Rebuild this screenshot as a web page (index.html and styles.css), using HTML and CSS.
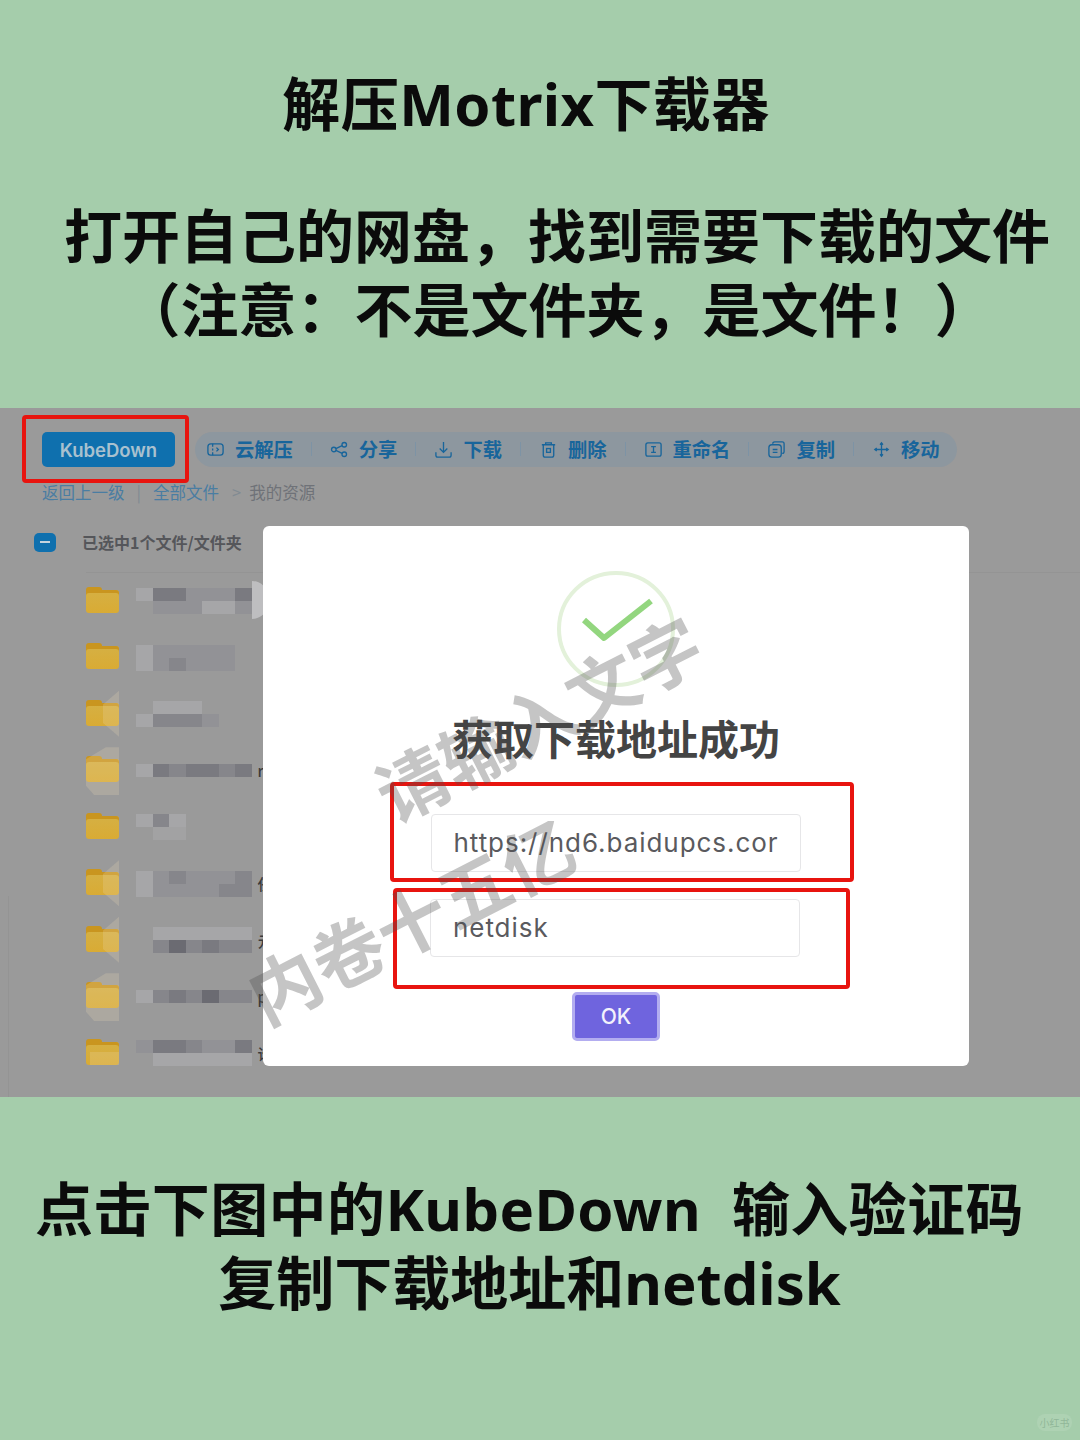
FILE: index.html
```html
<!DOCTYPE html>
<html lang="zh-CN">
<head>
    <meta charset="UTF-8">
    <title>解压Motrix下载器</title>
    <link rel="stylesheet" href="styles.css">
</head>
<body>
    <div class="page">
        <section class="caption caption-top">
            <h1 class="title">解压Motrix下载器</h1>
            <p class="line">打开自己的网盘，找到需要下载的文件</p>
            <p class="line line-sub">（注意：不是文件夹，是文件！）</p>
        </section>

        <section class="shot">
            <div class="toolbar">
                <div class="red-box kube-box"><button class="kube">KubeDown</button></div>
                <div class="actions">
                    <span class="action">
                        <svg viewBox="0 0 20 20"><rect x="2" y="4" width="16" height="12" rx="3"/><path d="M7 4v3M7 9v2M7 13v3M11 8l2 2-2 2"/></svg>云解压
                    </span>
                    <i class="sep"></i>
                    <span class="action">
                        <svg viewBox="0 0 20 20"><circle cx="4" cy="10" r="2.4"/><circle cx="15" cy="5" r="2.4"/><circle cx="15" cy="15" r="2.4"/><path d="M6.2 9l6.6-3M6.2 11l6.6 3"/></svg>分享
                    </span>
                    <i class="sep"></i>
                    <span class="action">
                        <svg viewBox="0 0 20 20"><path d="M10 2v11M6 9l4 4 4-4M2 13v3a2 2 0 0 0 2 2h12a2 2 0 0 0 2-2v-3"/></svg>下载
                    </span>
                    <i class="sep"></i>
                    <span class="action">
                        <svg viewBox="0 0 20 20"><path d="M3 5h14M7 5V3h6v2M4.500 5v11a2 2 0 0 0 2 2h7a2 2 0 0 0 2-2V5"/><rect x="8" y="9" width="4" height="4"/></svg>删除
                    </span>
                    <i class="sep"></i>
                    <span class="action">
                        <svg viewBox="0 0 20 20"><rect x="2" y="3" width="16" height="14" rx="2"/><path d="M7.500 7h5M10 7v6M7.500 13h5"/></svg>重命名
                    </span>
                    <i class="sep"></i>
                    <span class="action">
                        <svg viewBox="0 0 20 20"><path d="M6 4a2 2 0 0 1 2-2h8a2 2 0 0 1 2 2v8a2 2 0 0 1-2 2"/><rect x="2" y="5" width="13" height="13" rx="3"/><path d="M6 10h5M6 13h5"/></svg>复制
                    </span>
                    <i class="sep"></i>
                    <span class="action">
                        <svg viewBox="0 0 20 20"><path d="M10 3v14M3 10h14M8.500 5L10 3l1.500 2M8.500 15l1.500 2 1.500-2M5 8.500L3 10l2 1.500M15 8.500l2 1.500-2 1.500"/></svg>移动
                    </span>
                </div>
            </div>

            <div class="crumbs">
                <a>返回上一级</a><i>|</i><a>全部文件</a><i class="gt">&gt;</i><span>我的资源</span>
            </div>

            <div class="selected">
                <span class="check"></span>
                <span class="selected-text">已选中1个文件/文件夹</span>
            </div>

            <div class="files">
                <div class="file">
                    <span class="folder"></span>
                    <div class="strip">
                        <b class="s1"></b><b class="s4"></b><b class="s4"></b><b class="s2"></b><b class="s2"></b><b class="s2"></b><b class="s4"></b>
                        <b></b><b class="s2"></b><b class="s2"></b><b class="s2"></b><b class="s1"></b><b class="s1"></b><b class="s2"></b>
                    </div>
                    <span class="blob"></span>
                </div>
                <div class="file">
                    <span class="folder"></span>
                    <div class="strip">
                        <b class="s1"></b><b class="s2"></b><b class="s2"></b><b class="s2"></b><b class="s2"></b><b class="s2"></b><b></b>
                        <b class="s1"></b><b class="s2"></b><b class="s3"></b><b class="s2"></b><b class="s2"></b><b class="s2"></b><b></b>
                    </div>
                </div>
                <div class="file">
                    <span class="folder ghost ghost-right"></span>
                    <div class="strip">
                        <b></b><b class="s1"></b><b class="s1"></b><b class="s1"></b><b></b><b></b><b></b>
                        <b class="s1"></b><b class="s3"></b><b class="s3"></b><b class="s3"></b><b class="s2"></b><b></b><b></b>
                    </div>
                </div>
                <div class="file">
                    <span class="folder ghost ghost-wide"></span>
                    <div class="strip strip-low">
                        <b class="s1"></b><b class="s4"></b><b class="s3"></b><b class="s4"></b><b class="s4"></b><b class="s3"></b><b class="s4"></b>
                        <b></b><b></b><b></b><b></b><b></b><b></b><b></b>
                    </div>
                    <span class="cut">r</span>
                </div>
                <div class="file">
                    <span class="folder"></span>
                    <div class="strip">
                        <b class="s1"></b><b class="s3"></b><b class="s1"></b><b></b><b></b><b></b><b></b>
                        <b></b><b class="s0"></b><b class="s0"></b><b></b><b></b><b></b><b></b>
                    </div>
                </div>
                <div class="file">
                    <span class="folder ghost ghost-right"></span>
                    <div class="strip">
                        <b class="s1"></b><b class="s2"></b><b class="s3"></b><b class="s2"></b><b class="s2"></b><b class="s2"></b><b class="s3"></b>
                        <b class="s1"></b><b class="s2"></b><b class="s2"></b><b class="s2"></b><b class="s2"></b><b class="s3"></b><b class="s3"></b>
                    </div>
                    <span class="cut">任</span>
                </div>
                <div class="file">
                    <span class="folder ghost ghost-right"></span>
                    <div class="strip">
                        <b></b><b class="s1"></b><b class="s1"></b><b class="s1"></b><b class="s1"></b><b class="s1"></b><b class="s1"></b>
                        <b></b><b class="s3"></b><b class="s5"></b><b class="s3"></b><b class="s4"></b><b class="s3"></b><b class="s3"></b>
                    </div>
                    <span class="cut">亓</span>
                </div>
                <div class="file">
                    <span class="folder ghost ghost-wide"></span>
                    <div class="strip strip-low">
                        <b class="s1"></b><b class="s3"></b><b class="s4"></b><b class="s3"></b><b class="s5"></b><b class="s3"></b><b class="s3"></b>
                        <b></b><b></b><b></b><b></b><b></b><b></b><b></b>
                    </div>
                    <span class="cut">pl</span>
                </div>
                <div class="file">
                    <span class="folder ghost ghost-low"></span>
                    <div class="strip">
                        <b class="s2"></b><b class="s4"></b><b class="s4"></b><b class="s3"></b><b class="s2"></b><b class="s2"></b><b class="s4"></b>
                        <b></b><b class="s1"></b><b class="s1"></b><b class="s1"></b><b class="s1"></b><b class="s1"></b><b class="s1"></b>
                    </div>
                    <span class="cut">论</span>
                </div>
            </div>

            <div class="modal">
                <svg class="success" viewBox="0 0 120 118">
                    <ellipse cx="60" cy="59" rx="57" ry="56" fill="none" stroke="#e3f1da" stroke-width="4"/>
                    <path d="M28 50l20 18L95 31" fill="none" stroke="#93d67f" stroke-width="6" stroke-linejoin="round"/>
                </svg>
                <h2 class="modal-title">获取下载地址成功</h2>
                <div class="red-box url-box"><div class="field">https://nd6.baidupcs.cor</div></div>
                <div class="red-box disk-box"><div class="field">netdisk</div></div>
                <button class="ok">OK</button>
            </div>
        </section>

        <section class="caption caption-bottom">
            <p class="line">点击下图中的KubeDown&nbsp;&nbsp;输入验证码</p>
            <p class="line line-tight">复制下载地址和netdisk</p>
        </section>

        <div class="mark mark-one">请输入文字</div>
        <div class="mark mark-two">内卷十五亿</div>
        <div class="tag">小红书</div>
    </div>
</body>
</html>
```

FILE: styles.css
```css
* {
    box-sizing: border-box;
}
body {
    margin: 0;
    background: #a5cdab;
    font-family: "Noto Sans", "Noto Sans CJK SC", sans-serif;
}
.page {
    position: relative;
    width: 1080px;
    height: 1440px;
    overflow: hidden;
    display: flex;
    flex-direction: column;
}

/* green captions */
.caption {
    color: #0b0b0b;
    text-align: center;
    font-weight: 700;
    font-size: 58px;
    line-height: 74px;
}
.caption-top {
    height: 408px;
    padding-top: 67px;
}
.caption-bottom {
    flex: 1;
    padding: 75px 21px 0 0;
    letter-spacing: 0.4px;
}
.title {
    margin: 0 28px 58px 0;
    font-size: 58px;
    line-height: 74px;
    letter-spacing: 0.4px;
}
.line {
    margin: 0;
    white-space: nowrap;
}
.line-tight {
    letter-spacing: 0;
}
.caption-top .line {
    padding-left: 34px;
}
.caption-top .line-sub {
    padding-left: 35px;
}

/* dimmed screenshot */
.shot {
    position: relative;
    height: 689px;
    background: #9a9a9a;
    padding-top: 7px;
    font-family: "Noto Sans CJK SC", sans-serif;
    overflow: hidden;
}
.shot::before {
    content: "";
    position: absolute;
    left: 8px;
    top: 488px;
    bottom: 0;
    width: 1px;
    background: #949494;
}
.toolbar {
    display: flex;
    align-items: center;
    padding-left: 22px;
}
.red-box {
    border: 4px solid #e8140f;
    border-radius: 4px;
}
.kube-box {
    width: 167px;
    height: 68px;
    padding: 13px 0 0 16px;
}
.kube {
    display: block;
    width: 133px;
    height: 35px;
    border: none;
    border-radius: 5px;
    background: #0f70ae;
    color: #a9c1cf;
    font-family: Inter, sans-serif;
    font-size: 18.500px;
    font-weight: 600;
    padding: 0;
}
.actions {
    display: flex;
    align-items: center;
    height: 35px;
    margin-left: 6px;
    padding: 0 17px 0 11px;
    border-radius: 18px;
    background: #8d979f;
}
.action {
    display: flex;
    align-items: center;
    gap: 10px;
    color: #18659b;
    font-size: 19.300px;
    font-weight: 700;
    white-space: nowrap;
}
.action svg {
    width: 19px;
    height: 19px;
    fill: none;
    stroke: #18659b;
    stroke-width: 1.4;
}
.sep {
    width: 1px;
    height: 14px;
    margin: 0 18px;
    background: #7d93a5;
}
.crumbs {
    display: flex;
    align-items: center;
    margin: 0 0 0 42px;
    height: 18px;
    font-size: 16.500px;
    color: #6f7278;
}
.crumbs a {
    color: #4a7da2;
}
.crumbs i {
    font-style: normal;
    margin: 0 12px;
    color: #818a92;
}
.crumbs .gt {
    margin: 0 8px 0 13px;
}
.selected {
    display: flex;
    align-items: center;
    margin: 31px 0 0 34px;
    height: 20px;
}
.check {
    position: relative;
    width: 22px;
    height: 19px;
    border-radius: 5px;
    background: #0f70ae;
}
.check::after {
    content: "";
    position: absolute;
    left: 6px;
    top: 8px;
    width: 10px;
    height: 2px;
    background: #c5d4de;
}
.selected-text {
    margin-left: 26px;
    font-size: 16px;
    font-weight: 700;
    color: #55565a;
}
.files {
    margin: 20px 0 0 86px;
    border-top: 1px solid #949494;
}
.file {
    position: relative;
    display: flex;
    align-items: center;
    height: 56.500px;
}
.folder {
    position: relative;
    width: 33px;
    height: 23px;
    border-radius: 3px;
    background: linear-gradient(#d5b044, #d9ab34);
    box-shadow: inset 0 3px 0 #c9951f;
}
.folder::before {
    content: "";
    position: absolute;
    left: 0;
    top: -3px;
    width: 16px;
    height: 5px;
    border-radius: 3px 3px 0 0;
    background: #c9951f;
}
.ghost::after {
    content: "";
    position: absolute;
    background: rgba(235, 220, 180, 0.22);
}
.ghost-right::after {
    right: 0;
    top: -12px;
    width: 16px;
    height: 46px;
    clip-path: polygon(100% 0, 100% 100%, 0 70%, 0 30%);
}
.ghost-wide::after {
    left: 0;
    top: -12px;
    width: 33px;
    height: 48px;
    clip-path: polygon(0 25%, 60% 0, 100% 0, 100% 100%, 25% 100%, 0 80%);
}
.ghost-low::after {
    left: 4px;
    top: 10px;
    width: 29px;
    height: 13px;
}
.strip {
    display: grid;
    grid-template-columns: repeat(7, 16.500px);
    grid-auto-rows: 13px;
    margin-left: 17px;
}
.strip-low {
    margin-top: 13px;
}
.s0 { background: #a2a2a3; }
.s1 { background: #a6a6a8; }
.s2 { background: #929296; }
.s3 { background: #86868b; }
.s4 { background: #7a7a80; }
.s5 { background: #6b6b72; }
.blob {
    position: absolute;
    left: 166px;
    top: 8px;
    width: 16px;
    height: 38px;
    border-radius: 0 20px 20px 0;
    background: rgba(215, 215, 218, 0.6);
}
.cut {
    margin-left: 6px;
    color: #3a3a3c;
    font-size: 15px;
    font-weight: 500;
}

/* dialog over the file list */
.modal {
    position: absolute;
    left: 263px;
    top: 118px;
    width: 706px;
    height: 540px;
    border-radius: 6px;
    background: #fff;
    display: flex;
    flex-direction: column;
    align-items: center;
    padding-top: 44px;
    color: #444;
}
.success {
    display: block;
    width: 120px;
    height: 118px;
    margin-right: 1px;
}
.modal-title {
    margin: 24px 0 0 0;
    font-size: 41px;
    line-height: 50px;
    font-weight: 700;
    color: #444;
    white-space: nowrap;
}
.url-box {
    width: 464px;
    height: 100px;
    margin: 20px 0 0 11px;
    padding: 28px 0 0 37px;
}
.disk-box {
    width: 457px;
    height: 101px;
    margin: 6px 0 0 11px;
    padding: 7px 0 0 33px;
}
.field {
    width: 370px;
    height: 58px;
    border: 1px solid #e6e6e8;
    border-radius: 4px;
    padding: 0 22px;
    overflow: hidden;
    white-space: nowrap;
    font-family: Inter, sans-serif;
    font-size: 26px;
    line-height: 56px;
    letter-spacing: 0.950px;
    color: #5a5a5e;
}
.ok {
    width: 88px;
    height: 49px;
    margin-top: 3px;
    border: 3px solid #b3adf0;
    border-radius: 5px;
    background: #6f64de;
    color: #f2f1fc;
    font-family: Inter, sans-serif;
    font-size: 21px;
    font-weight: 500;
    padding: 0;
}

/* watermark and corner tag */
.mark {
    position: absolute;
    font-family: "Noto Sans CJK SC", sans-serif;
    font-weight: 700;
    font-size: 71px;
    line-height: 72px;
    color: rgba(80, 80, 80, 0.33);
    white-space: nowrap;
    transform: rotate(-27deg);
    transform-origin: center;
}
.mark-one {
    left: 360px;
    top: 680px;
}
.mark-two {
    left: 232px;
    top: 882px;
}
.tag {
    position: absolute;
    right: 8px;
    bottom: 9px;
    width: 35px;
    height: 17px;
    border-radius: 8px;
    background: rgba(255, 255, 255, 0.1);
    color: rgba(130, 170, 140, 0.7);
    font-size: 10px;
    line-height: 17px;
    text-align: center;
    font-family: "Noto Sans CJK SC", sans-serif;
}
```
